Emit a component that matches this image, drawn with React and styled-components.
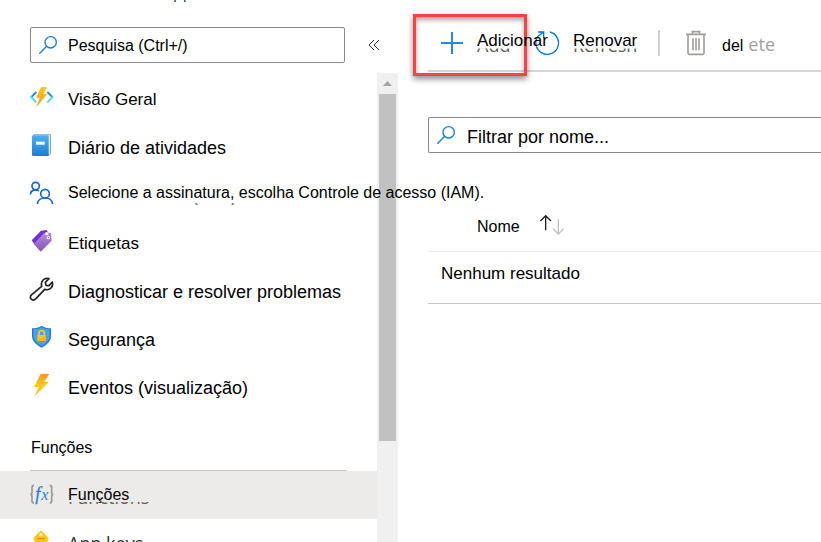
import { useState } from "react";
import styled, { createGlobalStyle } from "styled-components";

const GlobalStyle = createGlobalStyle`
    * { box-sizing: border-box; }
    body {
        margin: 0;
        background: #fff;
        color: #000;
        font-family: "Liberation Sans", Arial, sans-serif;
        font-size: 16px;
        line-height: 20px;
    }
    svg { display: block; flex: none; overflow: visible; }
`

const Page = styled.div`
    display: flex;
    height: 100vh;
    overflow: hidden;
`

const Sidebar = styled.aside`
    position: relative;
    z-index: 1;
    flex: none;
    display: flex;
    flex-direction: column;
    width: 398px;
`

// the breadcrumb is scrolled up, only its last pixels stay on the page
const Breadcrumb = styled.div`
    display: flex;
    align-items: flex-end;
    height: 2px;
    padding-left: 94px;
    overflow: hidden;
    color: #323130;
    font-family: "Open Sans", sans-serif;
    line-height: 16px;
`

const SearchRow = styled.div`
    display: flex;
    align-items: center;
    gap: 23px;
    padding: 25px 18px 10px 30px;
`

const SearchLabel = styled.label`
    position: relative;
    display: block;
    flex: 1;

    svg {
        position: absolute;
        left: 9px;
        top: 9px;
    }
`

const SearchInput = styled.input`
    display: block;
    width: 100%;
    height: 36px;
    padding: 2px 8px 0 37px;
    border: 1px solid #8a8886;
    border-radius: 2px;
    background: #fff;
    color: #000;
    font-family: inherit;
    font-size: ${props => props.$size || 16}px;
    outline: none;

    &::placeholder {
        color: #000;
        opacity: 1;
    }
`

const FilterInput = styled(SearchInput)`
    padding-top: 4px;
    padding-left: 38px;
    border-right: 0;
    border-radius: 2px 0 0 2px;
`

const IconButton = styled.button`
    padding: 0;
    border: 0;
    background: none;
    cursor: pointer;
`

const ScrollArea = styled.div`
    flex: 1;
    display: flex;
    min-height: 0;
`

const Nav = styled.nav`
    flex: 1;
    min-width: 0;
`

const List = styled.ul`
    margin: 0;
    padding: 0;
    list-style: none;
`

const NavLink = styled.a`
    display: flex;
    align-items: center;
    gap: 14px;
    height: 48px;
    padding-left: 30px;
    background: ${props => props.$active ? "#edebe9" : "transparent"};
    color: ${props => props.$muted ? "#323130" : "#000"};
    font-size: ${props => props.$size}px;
    text-decoration: none;
    white-space: nowrap;
`

const NavText = styled.span`
    position: relative;
    padding-top: ${props => props.$low ? 6 : 0}px;
    font-family: ${props => props.$muted ? '"Open Sans", sans-serif' : "inherit"};
`

// older caption lying below the new one, only its feet can be seen
const OldText = styled.span`
    position: absolute;
    left: 0;
    top: ${props => props.$top || 2}px;
    clip-path: inset(${props => props.$cut || 14}px 0 0 0);
    color: #605e5c;
    font-family: "Open Sans", sans-serif;
    font-size: 18px;
    line-height: 20px;
`

const GroupTitle = styled.h2`
    margin: 0 30px 0 30px;
    padding: 29px 1px 12px;
    border-bottom: 1px solid #c8c6c4;
    font-size: 16px;
    font-weight: 400;
`

const ScrollBar = styled.div`
    flex: none;
    display: flex;
    flex-direction: column;
    width: 21px;
    padding: 0 2px;
    background: #f0f0f0;
`

const ScrollArrow = styled.div`
    flex: none;
    display: flex;
    align-items: center;
    justify-content: center;
    height: 21px;
`

const ScrollThumb = styled.div`
    height: 74%;
    background: #c1c1c1;
`

const Main = styled.main`
    flex: 1;
    min-width: 0;
    padding-left: 30px;
`

const Toolbar = styled.div`
    position: relative;
    display: flex;
    align-items: center;
    height: 72px;
    padding: 15px 0 0 13px;
    border-bottom: 2px solid #d6d6d6;
`

const ToolButton = styled.button`
    flex: none;
    display: flex;
    align-items: center;
    gap: 14px;
    width: ${props => props.$width}px;
    padding: 0;
    border: 0;
    background: none;
    color: #000;
    font-family: inherit;
    font-size: 16px;
    line-height: 20px;
    white-space: nowrap;
    cursor: pointer;
`

const ToolText = styled.span`
    position: relative;
    z-index: 1;
    padding-bottom: 4px;
    font-size: 17px;
`

const DeleteText = styled.span`
    padding: 4px 0 0 2px;
`

const Faded = styled.span`
    margin-left: 5px;
    color: #a19f9d;
    font-family: "Open Sans", sans-serif;
    font-size: 18px;
`

const Divider = styled.div`
    width: 2px;
    height: 26px;
    margin-right: 26px;
    background: #d2d0ce;
`

const Highlight = styled.div`
    position: absolute;
    left: -15px;
    top: 14px;
    width: 114px;
    height: 62px;
    border: 3px solid #fb4142;
    box-shadow: 0 3px 6px rgba(0, 0, 0, .45), inset 0 3px 5px rgba(0, 0, 0, .35);
    pointer-events: none;
`

const Filter = styled(SearchLabel)`
    margin-top: 45px;
`

const Table = styled.table`
    width: 100%;
    margin-top: 48px;
    border-collapse: collapse;
    text-align: left;
`

const HeadCell = styled.th`
    height: 50px;
    padding: 2px 0 0 49px;
    border-bottom: 1px solid #edebe9;
    font-weight: 400;
`

const SortButton = styled.button`
    display: flex;
    align-items: center;
    gap: 20px;
    padding: 0;
    border: 0;
    background: none;
    color: inherit;
    font: inherit;
    cursor: pointer;

    svg { margin-bottom: 4px; }
`

const Cell = styled.td`
    height: 52px;
    padding: 0 0 6px 13px;
    border-bottom: 1px solid #c8c6c4;
    font-size: 17px;
`

function SearchIcon() {
    return (
        <svg width="18" height="18" viewBox="0 0 54 54" fill="none" stroke="#1b7fd6" strokeWidth="4" aria-hidden="true">
            <circle cx="35" cy="19" r="17"/>
            <path d="M23 31 1 53"/>
        </svg>
    )
}

function Icon({children}) {
    return <svg width="24" height="24" viewBox="0 0 72 72" fill="none" aria-hidden="true">{children}</svg>
}

const icons = {
    overview: (
        <Icon>
            <defs>
                <linearGradient id="boltA" x1="0" y1="0" x2="0" y2="1">
                    <stop offset="0" stopColor="#fccb0b"/><stop offset="1" stopColor="#f8962a"/>
                </linearGradient>
            </defs>
            <path d="M19 21 3 37M52 21 68 37" stroke="#1b8fe0" strokeWidth="6"/>
            <path d="M2 35 19 52M69 35 52 52" stroke="#50d8f5" strokeWidth="6"/>
            <path d="M33 6H51L40 27H52L19 66 29 38H18Z" fill="url(#boltA)"/>
        </Icon>
    ),
    log: (
        <Icon>
            <defs>
                <linearGradient id="book" x1="0" y1="0" x2="0" y2="1">
                    <stop offset="0" stopColor="#4eb0ee"/><stop offset="1" stopColor="#1a7fd4"/>
                </linearGradient>
            </defs>
            <path d="M10 3H59Q63 3 63 7V62L56 69H10Z" fill="#86aac4"/>
            <path d="M12 5H60V62L56 65Z" fill="#d7e9f5"/>
            <path d="M10 7H56V69H10Q6 69 6 65V11Q6 7 10 7Z" fill="url(#book)"/>
            <rect x="18" y="26" width="26" height="9" fill="#fff"/>
        </Icon>
    ),
    access: (
        <Icon>
            <g stroke="#1763db" strokeWidth="5">
                <circle cx="17" cy="15" r="11"/>
                <path d="M1 40C2 28 12 24 27 29"/>
                <circle cx="45" cy="38" r="13"/>
                <path d="M22 69C24 45 66 45 68 69"/>
            </g>
        </Icon>
    ),
    tags: (
        <Icon>
            <defs>
                <linearGradient id="tag" x1="0" y1="0" x2="0" y2="1">
                    <stop offset="0" stopColor="#b48be0"/><stop offset="1" stopColor="#8353b8"/>
                </linearGradient>
            </defs>
            <path d="M5 34 33 5 50 3 55 12 15 48Z" fill="#7331d0"/>
            <path d="M11 45 42 12 63 11 65 35 32 68Z" fill="url(#tag)"/>
            <path d="M43 11 51 9M53 23 60 27" stroke="#6c35b4" strokeWidth="4"/>
            <circle cx="50" cy="14" r="5" fill="#fff"/>
            <circle cx="55" cy="26" r="5" fill="#fff"/>
            <circle cx="55" cy="26" r="2" fill="#8353b8"/>
        </Icon>
    ),
    wrench: (
        <Icon>
            <path
                d="M5 53 35 28C31 12 43 1 57 5L46 16 48 25 57 26 67 15C71 29 60 42 44 37L18 65C8 75-6 63 5 53Z"
                stroke="#222" strokeWidth="5" strokeLinejoin="round"
            />
        </Icon>
    ),
    security: (
        <Icon>
            <path d="M35 2C43 9 52 9 63 10V33C63 51 47 61 35 68 23 61 6 51 6 33V10C17 9 27 9 35 2Z" fill="#1d78cf"/>
            <path d="M35 6C43 12 51 12 59 13V33C59 48 46 57 35 63 24 57 10 48 10 33V13C19 12 27 12 35 6Z" fill="#4f9ee9"/>
            <path d="M27 31V24C27 14 43 14 43 24V31" stroke="#f0cb3a" strokeWidth="5"/>
            <rect x="22" y="30" width="26" height="18" rx="2" fill="#fdc81b"/>
            <path d="M22 46 48 31V48H22Z" fill="#e9a90e" opacity=".5"/>
        </Icon>
    ),
    events: (
        <Icon>
            <defs>
                <linearGradient id="boltB" x1="0" y1="0" x2="0" y2="1">
                    <stop offset="0" stopColor="#f99324"/><stop offset=".5" stopColor="#fdcb14"/><stop offset="1" stopColor="#fbab1c"/>
                </linearGradient>
            </defs>
            <path d="M32 3H58L43 26H57L14 69 27 42H12Z" fill="url(#boltB)"/>
        </Icon>
    ),
    functions: (
        <Icon>
            <path
                d="M12 7Q6 7 6 14V27Q6 34 1 34 6 34 6 41V54Q6 60 12 60M59 7Q65 7 65 14V27Q65 34 70 34 65 34 65 41V54Q65 60 59 60"
                stroke="#9b9997" strokeWidth="5"
            />
            <text x="16" y="50" fill="#2484dc" stroke="#2484dc" fontFamily="Liberation Serif, serif" fontStyle="italic" fontSize="54">f</text>
            <text x="34" y="50" fill="#2484dc" fontFamily="Liberation Serif, serif" fontStyle="italic" fontSize="48">x</text>
        </Icon>
    ),
    keys: (
        <Icon>
            <path d="M28 2Q33-2 38 2L53 18Q58 24 53 29L40 41V66L33 72 26 66V41L13 29Q8 24 13 18Z" fill="#fdc511"/>
            <circle cx="33" cy="11" r="5" fill="#fff"/>
            <path d="M22 23H44" stroke="#c98a00" strokeWidth="3"/>
        </Icon>
    ),
}

const items = [
    {icon: "overview", text: "Visão Geral", size: 17, low: true},
    {icon: "log", text: "Diário de atividades", size: 18, low: true},
    {icon: "access", text: "Selecione a assinatura, escolha Controle de acesso (IAM).", size: 16, old: "Access control (IAM)", oldCut: 18},
    {icon: "tags", text: "Etiquetas", size: 17, low: true},
    {icon: "wrench", text: "Diagnosticar e resolver problemas", size: 18, low: true},
    {icon: "security", text: "Segurança", size: 18, low: true},
    {icon: "events", text: "Eventos (visualização)", size: 18, low: true},
]

const functionItems = [
    {icon: "functions", text: "Funções", size: 16, old: "Functions", oldCut: 15, active: true},
    {icon: "keys", text: "App keys", size: 18, muted: true},
]

function NavItem({item}) {
    return (
        <li>
            <NavLink href="#" $active={item.active} $muted={item.muted} $size={item.size}>
                {icons[item.icon]}
                <NavText $low={item.low} $muted={item.muted}>
                    {item.old && <OldText aria-hidden="true" $cut={item.oldCut}>{item.old}</OldText>}
                    {item.text}
                </NavText>
            </NavLink>
        </li>
    )
}

function App() {
    let [search, setSearch] = useState("");
    let [filter, setFilter] = useState("");

    return (
        <Page>
            <GlobalStyle/>
            <Sidebar>
                <Breadcrumb>Function App</Breadcrumb>
                <SearchRow>
                    <SearchLabel>
                        <SearchIcon/>
                        <SearchInput
                            aria-label="Pesquisa"
                            placeholder="Pesquisa (Ctrl+/)"
                            value={search}
                            onChange={(e) => setSearch(e.target.value)}
                        />
                    </SearchLabel>
                    <IconButton aria-label="Recolher">
                        <svg width="12" height="12" viewBox="0 0 12 12" fill="none" stroke="#323130">
                            <path d="M6 1 1 6 6 11M11 1 6 6 11 11"/>
                        </svg>
                    </IconButton>
                </SearchRow>
                <ScrollArea>
                    <Nav>
                        <List>
                            {items.map((item) => <NavItem key={item.icon} item={item}/>)}
                        </List>
                        <GroupTitle>Funções</GroupTitle>
                        <List>
                            {functionItems.map((item) => <NavItem key={item.icon} item={item}/>)}
                        </List>
                    </Nav>
                    <ScrollBar>
                        <ScrollArrow>
                            <svg width="9" height="5" viewBox="0 0 9 5"><path d="M0 5 4.5 0 9 5Z" fill="#a3a3a3"/></svg>
                        </ScrollArrow>
                        <ScrollThumb/>
                    </ScrollBar>
                </ScrollArea>
            </Sidebar>

            <Main>
                <Toolbar>
                    <ToolButton $width={94}>
                        <svg width="22" height="22" viewBox="0 0 22 22" stroke="#2b88d8" strokeWidth="2">
                            <path d="M11 0V22M0 11H22"/>
                        </svg>
                        <ToolText><OldText aria-hidden="true" $top={4}>Add</OldText>Adicionar</ToolText>
                    </ToolButton>
                    <ToolButton $width={123}>
                        <svg width="24" height="24" viewBox="0 0 72 72" fill="none" stroke="#0078d4" strokeWidth="4">
                            <path d="M45 3A34 34 0 1 1 9 16L26 3M9 3H26V20"/>
                        </svg>
                        <ToolText><OldText aria-hidden="true" $top={4}>Refresh</OldText>Renovar</ToolText>
                    </ToolButton>
                    <Divider/>
                    <ToolButton>
                        <svg width="20" height="24" viewBox="0 0 60 72" fill="none" stroke="#a19f9d" strokeWidth="5">
                            <path d="M0 10H60M19 10V2H41V10M6 10V66Q6 70 10 70H50Q54 70 54 66V10M21 22V58M30 22V58M39 22V58"/>
                        </svg>
                        <DeleteText>del<Faded>ete</Faded></DeleteText>
                    </ToolButton>
                    <Highlight/>
                </Toolbar>
                <Filter>
                    <SearchIcon/>
                    <FilterInput
                        $size={18}
                        aria-label="Filtrar por nome"
                        placeholder="Filtrar por nome..."
                        value={filter}
                        onChange={(e) => setFilter(e.target.value)}
                    />
                </Filter>
                <Table>
                    <thead>
                        <tr>
                            <HeadCell>
                                <SortButton>
                                    Nome
                                    <svg width="24" height="20" viewBox="0 0 72 60" fill="none" strokeWidth="4">
                                        <path d="M17 46V2M1 18 17 2 33 18" stroke="#222"/>
                                        <path d="M55 13V56M39 41 55 57 71 41" stroke="#c0c0c0"/>
                                    </svg>
                                </SortButton>
                            </HeadCell>
                        </tr>
                    </thead>
                    <tbody>
                        <tr>
                            <Cell>Nenhum resultado</Cell>
                        </tr>
                    </tbody>
                </Table>
            </Main>
        </Page>
    )
}

export default App;
